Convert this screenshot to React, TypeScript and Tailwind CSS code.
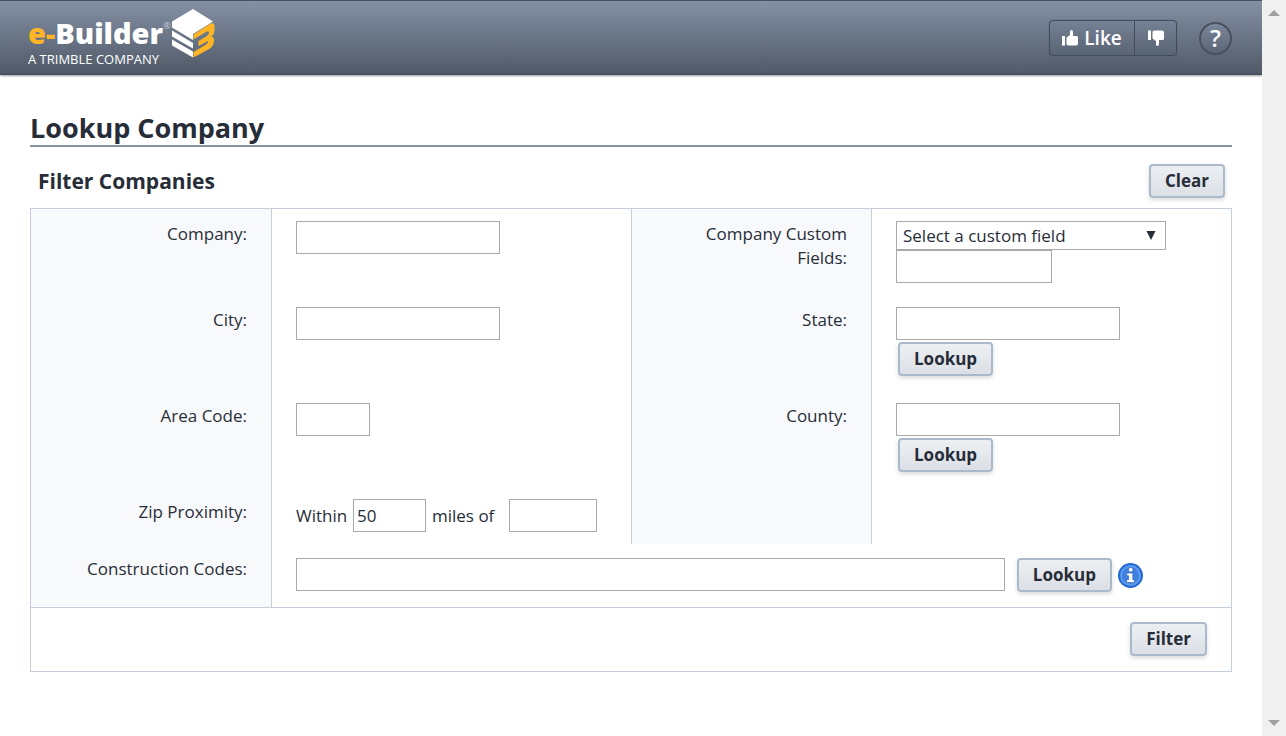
import { useState } from "react";
import type { ButtonHTMLAttributes, InputHTMLAttributes, ReactNode } from "react";

const customFields = ["Trade", "License Number", "Insurance Expiration"];

const emptyFilters = {
  company: "",
  customField: "",
  customValue: "",
  city: "",
  state: "",
  areaCode: "",
  county: "",
  miles: "50",
  zip: "",
  codes: "",
};

function Button({ children, ...rest }: ButtonHTMLAttributes<HTMLButtonElement>) {
  return (
    <button
      type="button"
      className="h-[34px] shrink-0 rounded border-2 border-[#abbaca] bg-linear-to-b from-[#eceff2] to-[#dce0e6] px-[14px] text-[17px] leading-7 font-bold text-[#272d38] shadow-[0_2px_4px_rgba(0,0,0,0.15)] hover:to-[#eceff2]"
      {...rest}
    >
      {children}
    </button>
  );
}

function TextBox({ className, ...rest }: InputHTMLAttributes<HTMLInputElement>) {
  return (
    <input
      type="text"
      className={`h-[33px] border border-[#a9a9a9] bg-white px-[3px] focus:outline-none focus:border-[#5b87c5] ${className}`}
      {...rest}
    />
  );
}

function Label({ id, children, className = "" }: { id: string; children: ReactNode; className?: string }) {
  return (
    <div className={`bg-[#f8f9fb] py-[13px] pr-6 pl-12 text-right ${className}`}>
      <label htmlFor={id}>{children}</label>
    </div>
  );
}

function Field({ children, className = "" }: { children: ReactNode; className?: string }) {
  return <div className={`border-[#c5cedb] pt-3 pl-6 ${className}`}>{children}</div>;
}

function Logo() {
  return (
    <a href="#" aria-label="e-Builder home" className="flex text-white">
      <span className="flex flex-col pt-2">
        <span className="flex items-start text-[29px] leading-[34px] font-extrabold">
          <span className="text-[#fdb525]">e-</span>Builder
          <span className="pt-1 text-[9px] leading-3 font-normal text-[#c3c9d2]">®</span>
        </span>
        <span className="text-[13px] leading-[18px]">A TRIMBLE COMPANY</span>
      </span>
      <svg width="44" height="50" viewBox="0 0 44 50">
        <path d="M1 13.500 22 1l20 12.500L22 26v6L1 19.500z" fill="#fff" />
        <path d="M1 22.500 22 35v5.500L1 28.500z" fill="#fff" />
        <path d="M1 31.500 22 43.500V49.500L1 37.500z" fill="#fff" />
        <path
          d="M22.500 26.500 38 16.500Q43.500 13.500 43.500 18v4q0 4-3 7 3 0 2.500 4-.5 5-4 7.500L22.500 49.500V44L35 36.500q2.500-1.500 2-3.500l-9.500 5V33l8.500-5q2.500-1.500 2-4-.5-1.500-3-.0L22.500 31.500z"
          fill="#fdb525"
        />
      </svg>
    </a>
  );
}

function ThumbIcon({ down = false }: { down?: boolean }) {
  return (
    <svg
      width="16"
      height="16"
      viewBox="0 0 16 16"
      fill="currentColor"
      className={down ? "-scale-y-100" : ""}
    >
      <path d="M0 6h3v9.500H0zM4.500 7.500 8 5V1.500Q8 0 9.300 0 11 0 11 2v4h3.500Q16 6 16 7.500V13.500q0 2-1.800 2H7Q5.500 15.500 4.500 14.500z" />
    </svg>
  );
}

function InfoIcon() {
  return (
    <svg width="25" height="25" viewBox="0 0 25 25">
      <circle cx="12.500" cy="12.500" r="11.500" fill="#5d9cec" stroke="#2168d4" strokeWidth="2" />
      <circle cx="12.500" cy="12.500" r="8.500" fill="#3f80e0" />
      <g fill="#fff" stroke="#1c55b5" strokeWidth=".6">
        <circle cx="12.700" cy="6.800" r="2.300" />
        <path d="M8.800 10h6v6.800h1.700v2.700H8.500v-2.700h2v-4H8.800z" />
      </g>
    </svg>
  );
}

export default function App() {
  const [filters, setFilters] = useState(emptyFilters);

  const bind = (name: keyof typeof emptyFilters) => ({
    id: name,
    name,
    value: filters[name],
    onChange: (e: React.ChangeEvent<HTMLInputElement | HTMLSelectElement>) =>
      setFilters({ ...filters, [name]: e.target.value }),
  });

  return (
    <div className="flex min-h-screen bg-white font-['Open_Sans','Noto_Sans',sans-serif] text-[17px] leading-6 text-[#272d38]">
      <div className="min-w-0 flex-1">
        <header className="flex h-[75px] items-start justify-between border-t border-b-2 border-t-[#465060] border-b-[#475160] bg-linear-to-b from-[#8490a4] to-[#515b69] pr-[30px] pl-7 shadow-[0_1px_2px_rgba(0,0,0,0.4)]">
          <div className="pt-[7px]">
            <Logo />
          </div>
          <div className="flex items-center gap-[22px] pt-[19px] text-white">
            <div className="flex h-9 rounded border border-[#414b5a] bg-linear-to-b from-[#758195] to-[#596474] shadow-[0_0_1px_#414b5a]">
              <button type="button" className="flex w-[84px] items-center justify-center gap-[6px] text-[19px] font-semibold">
                <ThumbIcon />
                Like
              </button>
              <button
                type="button"
                aria-label="Dislike"
                className="flex w-[42px] items-center justify-center border-l border-[#414b5a]"
              >
                <ThumbIcon down />
              </button>
            </div>
            <button
              type="button"
              aria-label="Help"
              className="size-[33px] rounded-full border-2 border-[#465060] bg-linear-to-b from-[#7b879a] to-[#5a6575] text-[24px] leading-7 font-semibold"
            >
              ?
            </button>
          </div>
        </header>

        <main className="px-[30px] pt-9 pb-16">
          <h1 className="border-b-2 border-[#8793a5] text-[27px] leading-[34px] font-bold">Lookup Company</h1>

          <form onSubmit={(e) => e.preventDefault()}>
            <div className="flex items-center justify-between pt-[17px] pr-[7px] pb-[10px] pl-2">
              <h2 className="text-[21px] leading-8 font-bold">Filter Companies</h2>
              <Button onClick={() => setFilters(emptyFilters)}>Clear</Button>
            </div>

            <div className="border border-[#c5cedb]">
              <div className="grid grid-cols-[2fr_3fr_2fr_3fr]">
                <Label id="company">Company:</Label>
                <Field className="border-l pb-3">
                  <TextBox {...bind("company")} className="w-[204px]" />
                </Field>
                <Label id="customField" className="border-l border-[#c5cedb]">
                  Company Custom Fields:
                </Label>
                <Field className="flex flex-col items-start border-l pb-3">
                  <div className="relative">
                    <select
                      {...bind("customField")}
                      className="block h-[29px] w-[270px] appearance-none border border-[#a9a9a9] bg-white px-[6px] leading-6"
                    >
                      <option value="">Select a custom field</option>
                      {customFields.map((f) => (
                        <option key={f}>{f}</option>
                      ))}
                    </select>
                    <svg width="10" height="9" viewBox="0 0 10 9" className="pointer-events-none absolute top-[10px] right-[10px]">
                      <path d="M.500 0h9L5 9z" fill="#272d38" />
                    </svg>
                  </div>
                  <TextBox {...bind("customValue")} aria-label="Custom field value" className="w-[156px]" />
                </Field>

                <Label id="city">City:</Label>
                <Field className="border-l pb-3">
                  <TextBox {...bind("city")} className="w-[204px]" />
                </Field>
                <Label id="state" className="border-l border-[#c5cedb]">
                  State:
                </Label>
                <Field className="flex flex-col items-start border-l pb-3">
                  <TextBox {...bind("state")} className="w-[224px]" />
                  <div className="flex px-[2px] pt-[2px] pb-[3px]">
                    <Button>Lookup</Button>
                  </div>
                </Field>

                <Label id="areaCode">Area Code:</Label>
                <Field className="border-l pb-3">
                  <TextBox {...bind("areaCode")} className="w-[74px]" />
                </Field>
                <Label id="county" className="border-l border-[#c5cedb]">
                  County:
                </Label>
                <Field className="flex flex-col items-start border-l pb-3">
                  <TextBox {...bind("county")} className="w-[224px]" />
                  <div className="flex px-[2px] pt-[2px] pb-[3px]">
                    <Button>Lookup</Button>
                  </div>
                </Field>

                <Label id="miles">Zip Proximity:</Label>
                <Field className="flex items-center border-l pb-3">
                  <span className="w-[57px]">Within</span>
                  <TextBox {...bind("miles")} className="w-[73px]" />
                  <label htmlFor="zip" className="w-[83px] pl-[6px]">
                    miles of
                  </label>
                  <TextBox {...bind("zip")} className="w-[88px]" />
                </Field>
                <div className="border-l border-[#c5cedb] bg-[#f8f9fb]" />
                <div className="border-l border-[#c5cedb]" />

                <Label id="codes">Construction Codes:</Label>
                <Field className="col-span-3 flex items-start border-l pt-[14px] pr-[88px] pb-[15px]">
                  <TextBox {...bind("codes")} className="mr-3 min-w-0 flex-1" />
                  <Button>Lookup</Button>
                  <button type="button" aria-label="About construction codes" className="ml-[6px] flex h-[34px] items-center">
                    <InfoIcon />
                  </button>
                </Field>
              </div>

              <div className="flex justify-end border-t border-[#c5cedb] pt-[14px] pr-6 pb-[15px]">
                <Button type="submit">Filter</Button>
              </div>
            </div>
          </form>
        </main>
      </div>

      {/* scroll track */}
      <div className="flex w-6 shrink-0 flex-col items-center justify-between bg-[#f0f0f0] py-[10px]" aria-hidden="true">
        <svg width="12" height="6" viewBox="0 0 12 6">
          <path d="M0 6 6 0l6 6z" fill="#a0a0a0" />
        </svg>
        <svg width="12" height="6" viewBox="0 0 12 6">
          <path d="M0 0h12L6 6z" fill="#a0a0a0" />
        </svg>
      </div>
    </div>
  );
}
